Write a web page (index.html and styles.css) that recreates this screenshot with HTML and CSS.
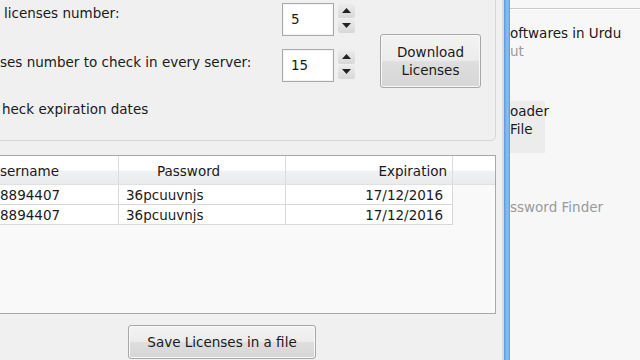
FILE: index.html
```html
<!DOCTYPE html>
<html>
<head>
<meta charset="utf-8">
<link rel="stylesheet" href="styles.css">
</head>
<body>
<div class="screen">
  <div class="app">
    <div class="group">
      <div class="form">
        <div class="label l1">licenses number:</div>
        <div class="spin-input">5</div>
        <div class="spin-btns">
          <span class="sb"><svg width="9" height="5" viewBox="0 0 9 5"><path d="M0 5 L4.5 0 L9 5Z" fill="#222"/></svg></span>
          <span class="sb"><svg width="9" height="5" viewBox="0 0 9 5"><path d="M0 0 L4.5 5 L9 0Z" fill="#222"/></svg></span>
        </div>
        <div class="label l2">ses number to check in every server:</div>
        <div class="spin-input">15</div>
        <div class="spin-btns">
          <span class="sb"><svg width="9" height="5" viewBox="0 0 9 5"><path d="M0 5 L4.5 0 L9 5Z" fill="#222"/></svg></span>
          <span class="sb"><svg width="9" height="5" viewBox="0 0 9 5"><path d="M0 0 L4.5 5 L9 0Z" fill="#222"/></svg></span>
        </div>
        <button class="btn download">Download<br>Licenses</button>
      </div>
      <div class="label l3">heck expiration dates</div>
    </div>

    <div class="table">
      <div class="thead">
        <div class="th c1">sername</div>
        <div class="th c2">Password</div>
        <div class="th c3">Expiration</div>
        <div class="th c4"></div>
      </div>
      <div class="tr">
        <div class="td c1">8894407</div>
        <div class="td c2">36pcuuvnjs</div>
        <div class="td c3">17/12/2016</div>
      </div>
      <div class="tr">
        <div class="td c1">8894407</div>
        <div class="td c2">36pcuuvnjs</div>
        <div class="td c3">17/12/2016</div>
      </div>
    </div>

    <button class="btn save">Save Licenses in a file</button>
  </div>
  <div class="divider"></div>
  <div class="side">
    <div class="side-line"></div>
    <div class="side-item dark">oftwares in Urdu</div>
    <div class="side-item gray">ut</div>
    <div class="side-box">oader<br>File</div>
    <div class="side-item gray finder">ssword Finder</div>
  </div>
</div>
</body>
</html>
```
FILE: styles.css
```css
* { box-sizing: border-box; }
html, body { margin: 0; padding: 0; }
body {
  width: 640px; height: 360px; overflow: hidden;
  font-family: "DejaVu Sans", Verdana, sans-serif;
  font-size: 13.5px;
  color: #1a1a1a;
  background: #f7f7f7;
}
.screen { display: flex; width: 640px; height: 360px; overflow: hidden; }
.app {
  width: 502px; flex: none;
  background: #f0f0f0;
  display: flex; flex-direction: column;
  overflow: hidden;
}
.group {
  margin: -12px 6px 0 -10px;
  height: 153px;
  border: 1px solid #d6d6d6;
  border-radius: 5px;
  padding: 14px 0 0 9px;
  box-shadow: inset 1px 1px 0 #fff;
}
.form {
  display: grid;
  grid-template-columns: 278px 52px 17px 101px;
  grid-template-rows: 33px 33px;
  column-gap: 4px;
  row-gap: 13px;
  align-items: center;
}
.label { line-height: 18px; white-space: nowrap; }
.l1 { padding-left: 4px; grid-row: 1; grid-column: 1; align-self: start; margin-top: 1px; }
.l2 { padding-left: 0; grid-row: 2; grid-column: 1; align-self: start; margin-top: 4px; }
.l3 { padding-left: 2px; margin-top: 18px; }
.spin-input {
  height: 33px;
  border: 1px solid #a9a9a9;
  background: #fff;
  padding: 0 0 0 8px;
  line-height: 31px;
  box-shadow: inset 0 0 0 1px #f4f4f4;
}
.spin-btns {
  display: flex; flex-direction: column; gap: 1px;
  height: 29px; align-self: center; margin-top: -3px;
}
.sb {
  flex: 1;
  display: flex; align-items: center; justify-content: center;
  background: linear-gradient(#ececec, #d8d8d8);
  border-radius: 2px;
}
.btn {
  font-family: "DejaVu Sans", Verdana, sans-serif;
  font-size: 13.5px;
  color: #1a1a1a;
  border: 1px solid #a8a8a8;
  border-radius: 3px;
  background: linear-gradient(#f3f3f3 0%, #ececec 48%, #dedede 52%, #d6d6d6 100%);
  box-shadow: inset 0 0 0 1px #f8f8f8;
  padding: 0;
  line-height: 18px;
}
.download {
  grid-column: 4; grid-row: 1 / span 2;
  margin-left: 21px;
  width: 101px; height: 54px;
  align-self: end; margin-bottom: -6px;
}
.table {
  margin: 14px 6px 0 -10px;
  height: 159px;
  border: 1px solid #a8a8a8;
  background: #f9f9f9;
  flex: none;
}
.thead {
  display: flex; height: 29px;
  background: linear-gradient(#ffffff 0%, #ffffff 50%, #f0f1f2 55%, #eaebec 100%);
  border-bottom: 1px solid #e0e0e0;
}
.th {
  line-height: 30px;
  border-right: 1px solid #dcdcdc;
  white-space: nowrap;
}
.c1 { width: 128px; padding-left: 9px; flex: none; }
.c2 { width: 167px; flex: none; }
.c3 { width: 167px; flex: none; text-align: right; }
.th.c2 { padding-left: 38px; }
.th.c3 { padding-right: 5px; }
.th.c4 { flex: 1; border-right: none; }
.tr { display: flex; height: 20px; }
.td {
  background: #fff;
  line-height: 21px;
  border-right: 1px solid #d8d8d8;
  border-bottom: 1px solid #d8d8d8;
  white-space: nowrap;
}
.td.c2 { padding-left: 7px; }
.td.c3 { padding-right: 9px; }
.save {
  margin: 11px 0 0 128px;
  width: 188px; height: 34px;
  flex: none;
}
.divider {
  width: 8px; flex: none;
  background: linear-gradient(90deg, #dadada 0px, #dadada 2px, #5d93df 2px, #7fb3f0 4px, #8cbdf4 6px, #5d93df 8px);
}
.side {
  flex: 1;
  background: #f7f7f7;
  display: flex; flex-direction: column;
  white-space: nowrap;
  overflow: hidden;
}
.side-line {
  margin-top: 8px;
  height: 2px;
  border-top: 1px solid #c9c9c9;
  border-bottom: 1px solid #fdfdfd;
}
.side-item { line-height: 18px; }
.dark { margin-top: 14px; color: #1a1a1a; }
.gray { color: #9a9a9a; }
.side-box {
  margin-top: 41px;
  width: 35px;
  height: 52px;
  background: #ececec;
  padding-top: 1px;
  line-height: 18px;
}
.finder { margin-top: 45px; }
```
